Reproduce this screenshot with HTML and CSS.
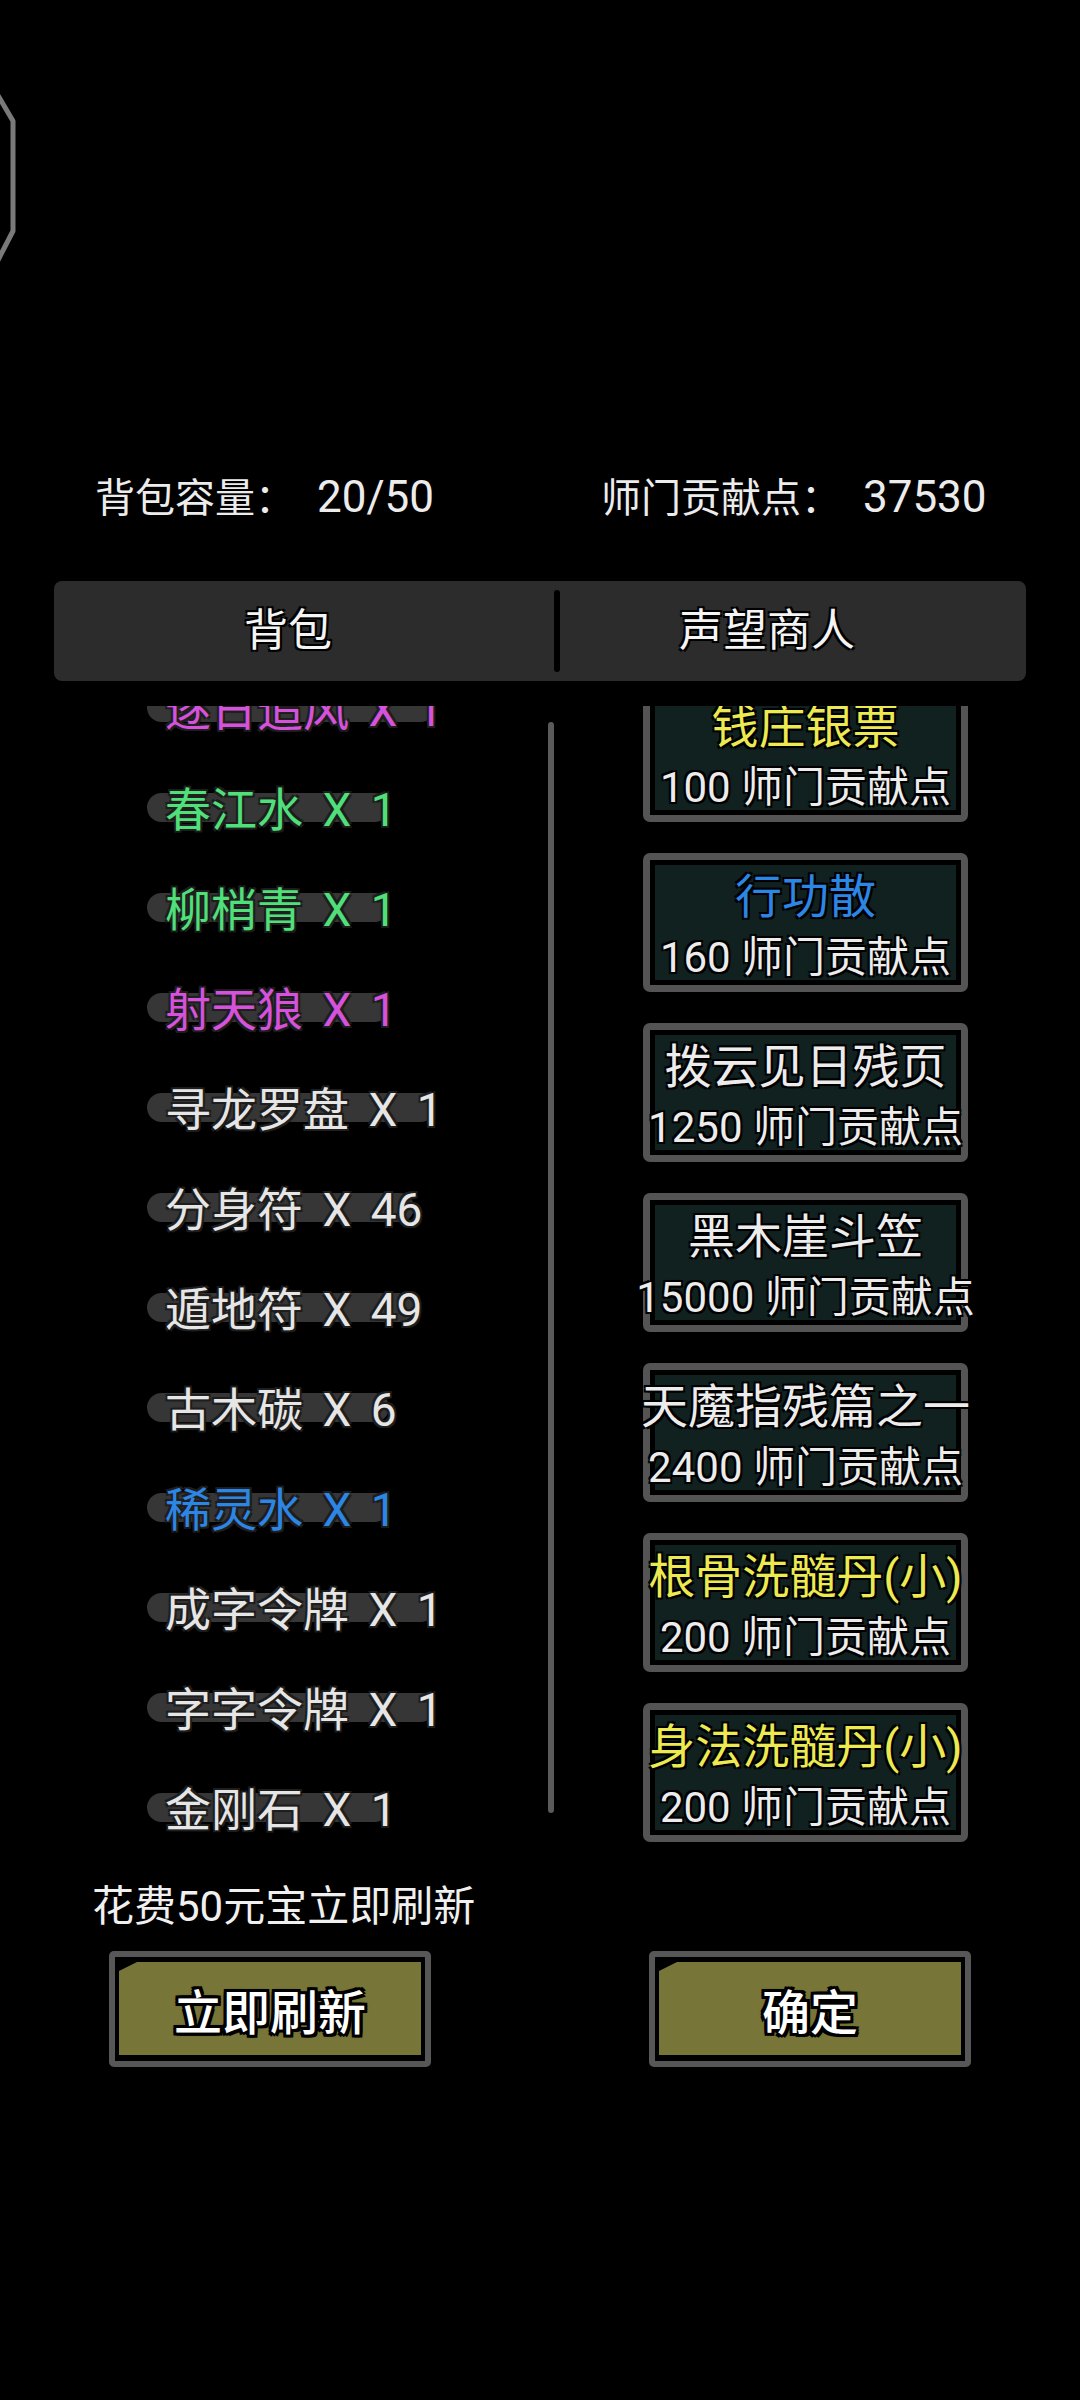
FILE: index.html
```html
<!DOCTYPE html>
<html lang="zh-CN">
<head>
  <meta charset="UTF-8" />
  <title>声望商人</title>
  <meta name="viewport" content="width=device-width, initial-scale=1.0" />
  <link rel="stylesheet" href="styles.css">
</head>
<body>

  <div class="deco">
    <svg width="30" height="280" viewBox="0 0 30 280">
      <polyline points="-4,92 13,121 13,231 -4,264" fill="none" stroke="#7a7a7a" stroke-width="5" stroke-linejoin="round" />
    </svg>
  </div>

  <div class="stats">
    <div>背包容量： <span class="num">20/50</span></div>
    <div>师门贡献点： <span class="num">37530</span></div>
  </div>

  <div class="tabs">
    <div class="tab tab-bag">背包</div>
    <div class="tab-divider"></div>
    <div class="tab tab-shop">声望商人</div>
  </div>

  <div class="lists">
    <!-- bag list, scrolled down a little -->
    <div class="bag">
      <div class="bag-items">
        <div class="item purple"><span class="item-name">逐日追风 X 1</span></div>
        <div class="item green"><span class="item-name">春江水 X 1</span></div>
        <div class="item green"><span class="item-name">柳梢青 X 1</span></div>
        <div class="item purple"><span class="item-name">射天狼 X 1</span></div>
        <div class="item"><span class="item-name">寻龙罗盘 X 1</span></div>
        <div class="item"><span class="item-name">分身符 X 46</span></div>
        <div class="item"><span class="item-name">遁地符 X 49</span></div>
        <div class="item"><span class="item-name">古木碳 X 6</span></div>
        <div class="item blue"><span class="item-name">稀灵水 X 1</span></div>
        <div class="item"><span class="item-name">成字令牌 X 1</span></div>
        <div class="item"><span class="item-name">字字令牌 X 1</span></div>
        <div class="item"><span class="item-name">金刚石 X 1</span></div>
      </div>
      <div class="scrollbar"></div>
    </div>

    <!-- shop list -->
    <div class="shop">
      <div class="shop-items">
        <div class="card"><div class="panel">
          <div class="card-title yellow">钱庄银票</div>
          <div class="card-price">100 师门贡献点</div>
        </div></div>
        <div class="card"><div class="panel">
          <div class="card-title blue">行功散</div>
          <div class="card-price">160 师门贡献点</div>
        </div></div>
        <div class="card"><div class="panel">
          <div class="card-title">拨云见日残页</div>
          <div class="card-price">1250 师门贡献点</div>
        </div></div>
        <div class="card"><div class="panel">
          <div class="card-title">黑木崖斗笠</div>
          <div class="card-price">15000 师门贡献点</div>
        </div></div>
        <div class="card"><div class="panel">
          <div class="card-title">天魔指残篇之一</div>
          <div class="card-price">2400 师门贡献点</div>
        </div></div>
        <div class="card"><div class="panel">
          <div class="card-title yellow">根骨洗髓丹(小)</div>
          <div class="card-price">200 师门贡献点</div>
        </div></div>
        <div class="card"><div class="panel">
          <div class="card-title yellow">身法洗髓丹(小)</div>
          <div class="card-price">200 师门贡献点</div>
        </div></div>
      </div>
    </div>
  </div>

  <div class="refresh-note">花费50元宝立即刷新</div>

  <div class="actions">
    <div class="btn"><div class="btn-face">立即刷新</div></div>
    <div class="btn"><div class="btn-face">确定</div></div>
  </div>

</body>
</html>
```

FILE: styles.css
```css
body {
  margin: 0;
  width: 1080px;
  height: 2400px;
  overflow: hidden;
  background: #000;
  color: #ececec;
  font-family: Roboto, "Noto Sans CJK SC", sans-serif;
}

.deco {
  height: 467px;
}

.deco svg {
  display: block;
}

.stats {
  display: grid;
  grid-template-columns: 506px 1fr;
  padding-left: 95px;
  height: 60px;
  line-height: 60px;
  font-size: 40px;
  word-spacing: 12px;
  text-shadow: 2px 2px 0 #000, -2px -2px 0 #000, 2px -2px 0 #000, -2px 2px 0 #000;
}

.stats .num {
  font-size: 44px;
}

.tabs {
  display: flex;
  align-items: center;
  margin: 54px 54px 0;
  height: 100px;
  background: #2c2c2c;
  border-radius: 8px;
}

.tab {
  text-align: center;
  font-size: 44px;
  line-height: 100px;
  color: #f4f4f4;
  text-shadow: 0 0 3px #000, 2px 2px 0 #000, -2px -2px 0 #000, 2px -2px 0 #000, -2px 2px 0 #000;
}

.tab-bag {
  width: 468px;
}

.tab-divider {
  width: 6px;
  height: 82px;
  margin-left: 32px;
  background: #000;
  border-radius: 3px;
}

.tab-shop {
  width: 414px;
}

.lists {
  display: flex;
  height: 1149px;
  margin-top: 25px;
}

.bag {
  position: relative;
  width: 560px;
  overflow: hidden;
}

.bag-items {
  margin-top: -50px;
}

.item {
  display: flex;
  align-items: center;
  height: 100px;
  padding-left: 165px;
  font-size: 46px;
  color: #e6e6e6;
}

.item-name {
  position: relative;
  isolation: isolate;
  white-space: nowrap;
  word-spacing: 8px;
  text-shadow: 0 0 3px #2a2a2a, 2px 2px 0 #1c1c1c, -2px -2px 0 #1c1c1c, 2px -2px 0 #1c1c1c, -2px 2px 0 #1c1c1c;
}

.item-name::before {
  content: "";
  position: absolute;
  left: -18px;
  right: 8px;
  top: 50%;
  height: 29px;
  margin-top: -13px;
  border-radius: 15px;
  background: #363636;
  z-index: -1;
}

.item.purple { color: #d652dc; }
.item.green { color: #4fe07a; }
.item.blue { color: #2c86e6; }

.scrollbar {
  position: absolute;
  left: 548px;
  top: 16px;
  width: 6px;
  height: 1091px;
  background: #5a5a5a;
  border-radius: 3px;
}

.shop {
  flex: 1;
  overflow: hidden;
}

.shop-items {
  margin-top: -23px;
  padding-left: 83px;
}

.card {
  width: 325px;
  height: 139px;
  box-sizing: border-box;
  margin-bottom: 31px;
  padding: 5px;
  border: 7px solid #545454;
  border-radius: 7px;
  background: #000;
}

.panel {
  height: 115px;
  background: #112120;
  text-align: center;
  white-space: nowrap;
  color: #ececec;
  text-shadow: 0 0 3px #000, 2px 2px 0 #000, -2px -2px 0 #000, 2px -2px 0 #000, -2px 2px 0 #000;
}

.card-title {
  padding-top: 2px;
  font-size: 47px;
  line-height: 60px;
  margin: 0 -40px;
}

.card-price {
  font-size: 42px;
  line-height: 62px;
  margin: 0 -40px;
}

.card-title.yellow { color: #ecea50; }
.card-title.blue { color: #2c86e6; }

.refresh-note {
  margin-top: 25px;
  padding-left: 92px;
  height: 54px;
  line-height: 54px;
  font-size: 42px;
  color: #f0f0f0;
}

.actions {
  display: flex;
  gap: 218px;
  margin-top: 17px;
  padding-left: 109px;
}

.btn {
  width: 322px;
  height: 116px;
  box-sizing: border-box;
  padding: 5px 4px 6px;
  border: 6px solid #575757;
  border-radius: 5px;
  background: #000;
}

.btn-face {
  height: 100%;
  display: flex;
  align-items: center;
  justify-content: center;
  background: #787538;
  clip-path: polygon(0 9px, 18px 0, 100% 0, 100% 100%, 0 100%);
  font-size: 48px;
  font-weight: 500;
  color: #fff;
  text-shadow: 0 0 4px #000, 3px 3px 0 #000, -3px -3px 0 #000, 3px -3px 0 #000, -3px 3px 0 #000, 0 3px 0 #000, 0 -3px 0 #000, 3px 0 0 #000, -3px 0 0 #000;
}
```
